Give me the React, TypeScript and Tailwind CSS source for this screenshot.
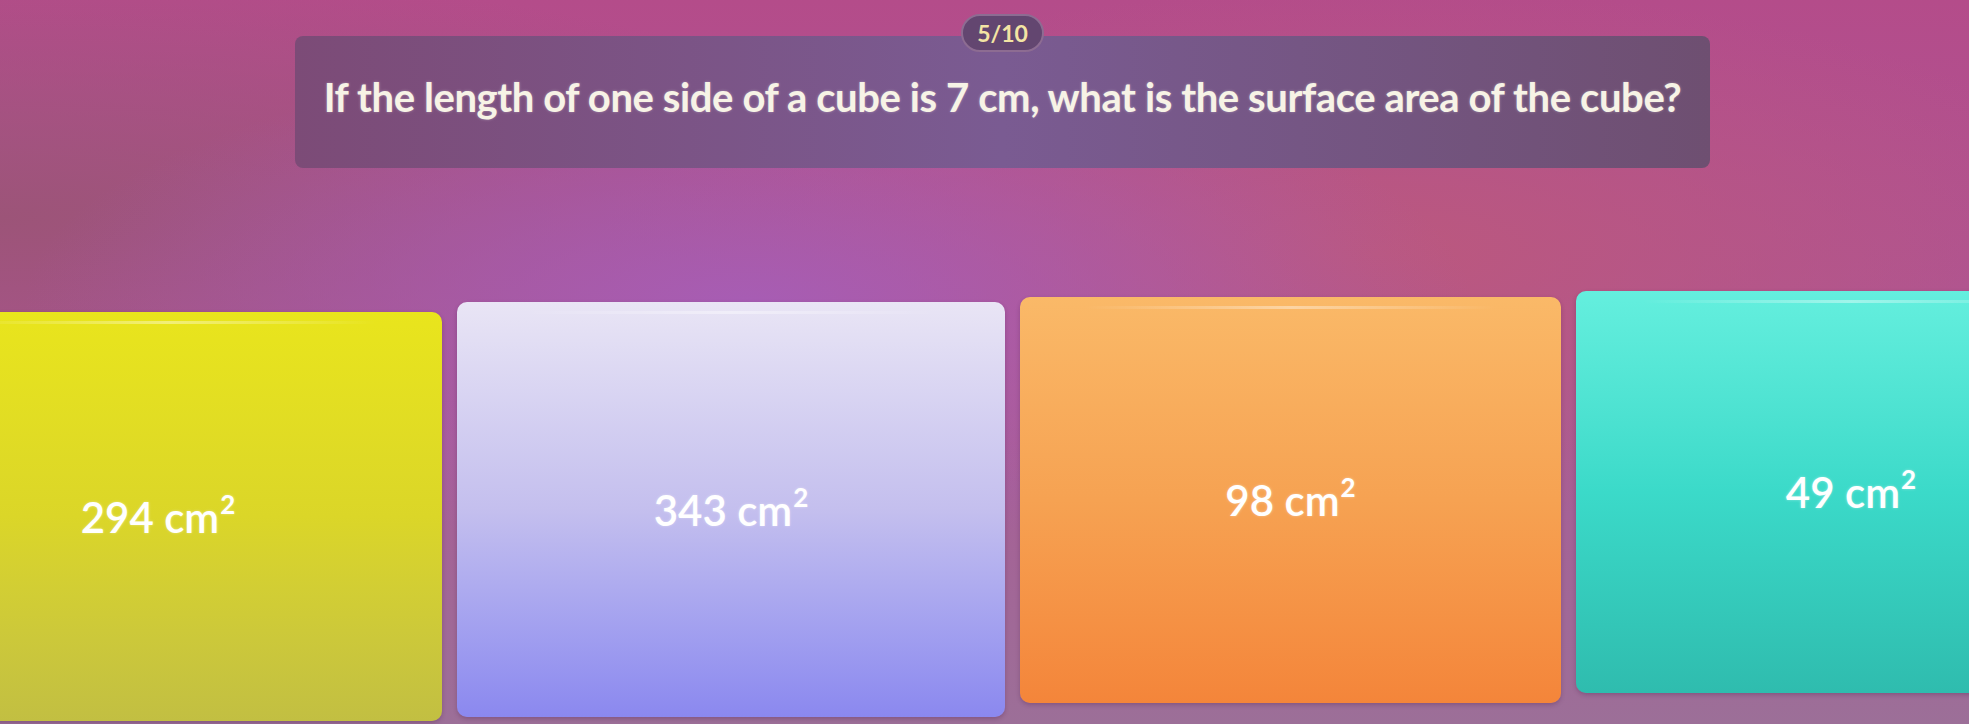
import type { ReactNode } from "react";

type Answer = {
  key: string;
  value: string;
  className: string;
};

const answers: Answer[] = [
  {
    key: "a",
    value: "294",
    className:
      "ml-[-106px] mt-[21px] h-[409px] w-[548px] pr-[20px] bg-gradient-to-b from-[#e9e51c] via-[#dbd628] to-[#c2bf42]",
  },
  {
    key: "b",
    value: "343",
    className:
      "mt-[11px] h-[415px] w-[548px] bg-gradient-to-b from-[#e9e5f5] via-[#c4bfee] to-[#8b88ef]",
  },
  {
    key: "c",
    value: "98",
    className:
      "mt-[6px] h-[406px] w-[541px] bg-gradient-to-b from-[#fab968] via-[#f6a252] to-[#f4853a]",
  },
  {
    key: "d",
    value: "49",
    className:
      "mt-0 h-[402px] w-[550px] bg-gradient-to-b from-[#64efde] via-[#3bdac9] to-[#2fbcae]",
  },
];

export default function App() {
  return (
    <div
      className="relative h-[724px] w-full overflow-hidden bg-[radial-gradient(ellipse_at_38%_42%,#a75db4_0%,rgba(167,93,180,0)_42%),radial-gradient(ellipse_at_70%_35%,#bb587e_0%,rgba(187,88,126,0)_40%),radial-gradient(ellipse_at_0%_30%,#9c5478_0%,rgba(156,84,120,0)_35%),linear-gradient(180deg,#b44c8a_0%,#ae5494_40%,#9c6f98_100%)]"
      style={{ fontFamily: "Lato, 'Noto Sans', sans-serif" }}
    >
      <div className="ml-[36px] flex flex-col items-center pt-[14px]">
        <div className="relative z-10 flex h-[38px] items-center rounded-full border-2 border-[#8d6c92] bg-[#634670] px-[14px] text-[23px] font-bold leading-none text-[#f3e4a4]">
          5/10
        </div>
        <div className="mt-[-16px] flex h-[132px] w-[1415px] items-center justify-center rounded-[8px] bg-gradient-to-r from-[#7c4b77] via-[#7a5b92] to-[#6e4f71] pb-[10px]">
          <h1 className="text-[40px] font-bold tracking-[-0.4px] text-[#f7f3e6] [text-shadow:0_0_3px_rgba(255,255,255,0.35)]">
            If the length of one side of a cube is 7 cm, what is the surface area of the cube?
          </h1>
        </div>
      </div>

      <div className="mt-[123px] flex items-start gap-[15px]">
        {answers.map((answer) => (
          <AnswerCard key={answer.key} className={answer.className}>
            {answer.value} cm<sup className="top-[-19px] ml-[1px] text-[26px] font-bold">2</sup>
          </AnswerCard>
        ))}
      </div>
    </div>
  );
}

function AnswerCard({ className, children }: { className: string; children: ReactNode }) {
  return (
    <div
      className={`relative flex shrink-0 items-center justify-center rounded-[10px] shadow-[0_2px_4px_rgba(60,20,60,0.25)] ${className}`}
    >
      <span className="pointer-events-none absolute left-[12%] right-[12%] top-[9px] h-[3px] rounded-full bg-gradient-to-r from-transparent via-white/40 to-transparent" />
      <span className="text-[42px] font-semibold leading-none text-white [text-shadow:0_0_3px_rgba(255,255,255,0.4)]">
        {children}
      </span>
    </div>
  );
}
